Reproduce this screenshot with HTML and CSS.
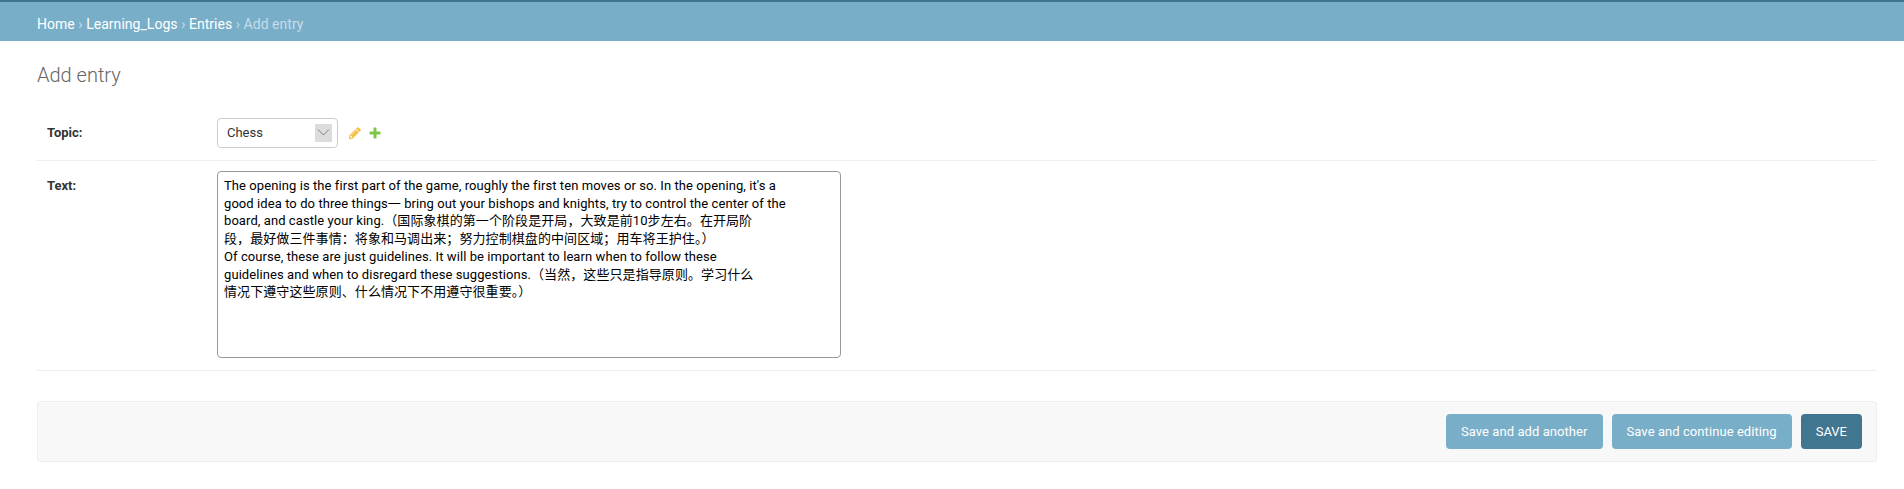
FILE: index.html
```html
<!DOCTYPE html>
<html lang="en">
<head>
  <meta charset="UTF-8">
  <title>Add entry</title>
  <link rel="stylesheet" href="styles.css">
</head>
<body>
  <div class="breadcrumbs">
    <a href="#">Home</a> › <a href="#">Learning_Logs</a> › <a href="#">Entries</a> › Add entry
  </div>
  <div class="content">
    <h1>Add entry</h1>
    <form>
      <div class="form-row topic-row">
        <label class="field-label" for="id_topic">Topic:</label>
        <span class="select-wrap">
          <select id="id_topic" class="topic-select">
            <option>Chess</option>
          </select>
          <span class="select-arrow">
            <svg width="17" height="18" viewBox="0 0 17 18"><path d="M3 5.5l5.5 5.5 5.5-5.5" fill="none" stroke="#666" stroke-width="0.8"/></svg>
          </span>
        </span>
        <a class="related" href="#">
          <svg width="14" height="14" viewBox="0 0 1792 1792"><path fill="#f4c145" d="M491 1536l91-91-235-235-91 91v107h128v128h107zm523-928q0-22-22-22-10 0-17 7l-542 542q-7 7-7 17 0 22 22 22 10 0 17-7l542-542q7-7 7-17zm-54-192l416 416-832 832h-416v-416zm683 96q0 53-37 90l-166 166-416-416 166-165q36-38 90-38 53 0 91 38l235 234q37 39 37 91z"/></svg>
        </a>
        <a class="related" href="#">
          <svg width="14" height="14" viewBox="0 0 1792 1792"><path fill="#7cc748" d="M1600 796v192q0 40-28 68t-68 28h-416v416q0 40-28 68t-68 28h-192q-40 0-68-28t-28-68v-416h-416q-40 0-68-28t-28-68v-192q0-40 28-68t68-28h416v-416q0-40 28-68t68-28h192q40 0 68 28t28 68v416h416q40 0 68 28t28 68z"/></svg>
        </a>
      </div>
      <div class="form-row text-row">
        <label class="field-label" for="id_text">Text:</label>
        <textarea id="id_text" class="entry-text">The opening is the first part of the game, roughly the first ten moves or so. In the opening, it's a
good idea to do three things一 bring out your bishops and knights, try to control the center of the
board, and castle your king.（国际象棋的第一个阶段是开局，大致是前10步左右。在开局阶
段，最好做三件事情：将象和马调出来；努力控制棋盘的中间区域；用车将王护住。）
Of course, these are just guidelines. It will be important to learn when to follow these
guidelines and when to disregard these suggestions.（当然，这些只是指导原则。学习什么
情况下遵守这些原则、什么情况下不用遵守很重要。）</textarea>
      </div>
      <div class="submit-row">
        <button type="button" class="btn">Save and add another</button>
        <button type="button" class="btn">Save and continue editing</button>
        <button type="button" class="btn btn-default">SAVE</button>
      </div>
    </form>
  </div>
</body>
</html>
```

FILE: styles.css
```css
* { box-sizing: border-box; }
body {
  margin: 0;
  font-family: Roboto, "Noto Sans CJK SC", sans-serif;
  font-size: 14px;
  color: #333;
  background: #fff;
}
.breadcrumbs {
  height: 41px;
  padding: 11px 37px 0;
  background: #79aec8;
  border-top: 2px solid #417690;
  color: #c4dce8;
  font-size: 14px;
  line-height: 22px;
  letter-spacing: 0.04px;
}
.breadcrumbs a {
  color: #fff;
  text-decoration: none;
}
.content {
  padding: 22px 27px 0 37px;
}
h1 {
  margin: 0 0 16px;
  font-size: 20px;
  font-weight: 300;
  line-height: 24px;
  color: #666;
}
.form-row {
  display: flex;
  padding: 10px;
  border-bottom: 1px solid #eee;
}
.topic-row {
  align-items: center;
  height: 58px;
  padding-top: 14px;
  padding-bottom: 12px;
}
.text-row {
  height: 210px;
}
.field-label {
  width: 170px;
  font-size: 13px;
  font-weight: 700;
  line-height: 30px;
  color: #333;
}
.select-wrap {
  position: relative;
  display: block;
  width: 121px;
  height: 30px;
}
.topic-select {
  width: 100%;
  height: 100%;
  padding: 0 9px;
  appearance: none;
  background: #fff;
  border: 1px solid #ccc;
  border-radius: 4px;
  font-family: inherit;
  font-size: 13px;
  color: #333;
}
.select-arrow {
  position: absolute;
  top: 6px;
  right: 6px;
  width: 17px;
  height: 18px;
  background: #dcdcdc;
  pointer-events: none;
}
.select-arrow svg { display: block; }
.related {
  display: block;
  height: 14px;
  margin-left: 6px;
}
.select-wrap + .related { margin-left: 10px; }
.related svg { display: block; }
.entry-text {
  display: block;
  width: 624px;
  height: 187px;
  padding: 5px 6px;
  border: 1px solid #999;
  border-radius: 4px;
  font-family: inherit;
  font-size: 13px;
  line-height: 17.7px;
  letter-spacing: 0.08px;
  color: #000;
  resize: none;
  overflow: hidden;
  white-space: pre;
}
.submit-row {
  display: flex;
  justify-content: flex-end;
  gap: 9px;
  margin-top: 30px;
  padding: 12px 14px;
  background: #f8f8f8;
  border: 1px solid #eee;
  border-radius: 4px;
}
.btn {
  height: 35px;
  padding: 0 15px;
  background: #79aec8;
  border: none;
  border-radius: 4px;
  font-family: inherit;
  font-size: 13px;
  letter-spacing: 0.07px;
  color: #fff;
}
.btn-default {
  background: #417690;
  letter-spacing: 0;
}
```
